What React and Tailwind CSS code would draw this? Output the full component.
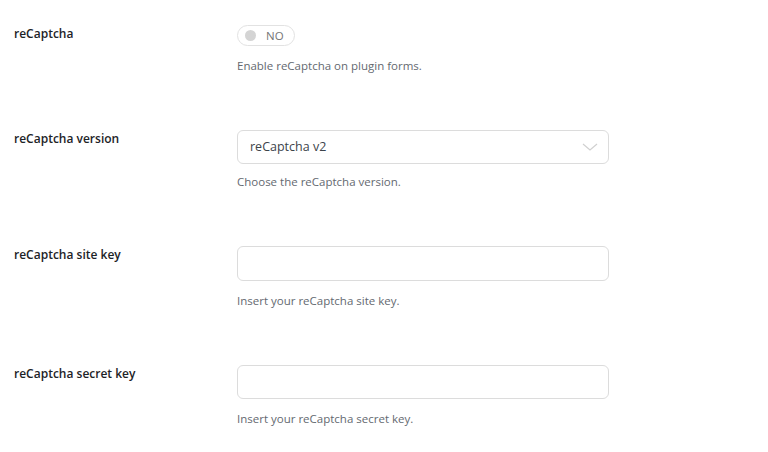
import React, { useState } from "react";

const font = { fontFamily: "'Open Sans', 'Noto Sans', sans-serif" };

function Row({ label, help, children, className = "" }) {
  return (
    <div className={"flex items-start " + className}>
      <div className="w-[237px] shrink-0 pl-[14px] pt-[2px] text-[12px] font-semibold text-[#1d2327] leading-[14px]">
        {label}
      </div>
      <div className="flex flex-col">
        {children}
        <p className="text-[11.5px] text-[#646970] leading-[16px]">{help}</p>
      </div>
    </div>
  );
}

export default function App() {
  const [on, setOn] = useState(false);

  return (
    <div className="w-[768px] h-[452px] bg-white" style={font}>
      <div className="flex flex-col pt-[25px]">
        {/* reCaptcha on/off */}
        <Row label="reCaptcha" help="Enable reCaptcha on plugin forms." className="mb-[56px]">
          <button
            onClick={() => setOn(!on)}
            className="flex items-center gap-[10px] w-[58px] h-[21px] pl-[7px] mb-[12px] rounded-full border border-[#e2e2e2] bg-white"
          >
            <span className="w-[11px] h-[11px] rounded-full bg-[#d4d4d4]" />
            <span className="text-[11.5px] text-[#757575] leading-none">NO</span>
          </button>
        </Row>

        {/* version */}
        <Row label="reCaptcha version" help="Choose the reCaptcha version." className="mb-[56px]">
          <div className="flex items-center justify-between w-[372px] h-[34px] px-[12px] mb-[10px] rounded-[6px] border border-[#dcdcdc]">
            <span className="text-[12.5px] text-[#3c434a]">reCaptcha v2</span>
            <svg width="16" height="10" viewBox="0 0 16 10" fill="none" className="mr-[-2px]">
              <path d="M1 2l7 6 7-6" stroke="#d0d0d0" strokeWidth="1.2" />
            </svg>
          </div>
        </Row>

        {/* site key */}
        <Row label="reCaptcha site key" help="Insert your reCaptcha site key." className="mb-[56px]">
          <input
            type="text"
            className="w-[372px] h-[35px] px-[12px] mb-[12px] rounded-[6px] border border-[#dcdcdc] outline-none text-[12.5px]"
          />
        </Row>

        {/* secret key */}
        <Row label="reCaptcha secret key" help="Insert your reCaptcha secret key.">
          <input
            type="text"
            className="w-[372px] h-[34px] px-[12px] mb-[12px] rounded-[6px] border border-[#dcdcdc] outline-none text-[12.5px]"
          />
        </Row>
      </div>
    </div>
  );
}
